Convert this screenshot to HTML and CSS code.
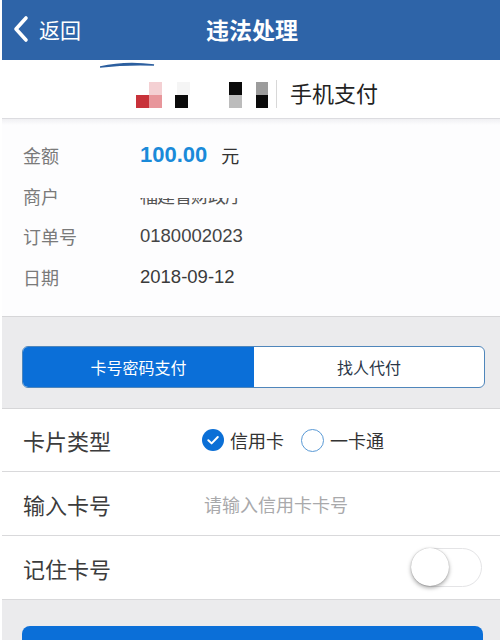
FILE: index.html
```html
<!DOCTYPE html>
<html lang="zh-CN">
<head>
<meta charset="utf-8">
<title>违法处理</title>
<link rel="stylesheet" href="styles.css">
</head>
<body>
<div class="page">
  <header class="header">
    <div class="back">
      <svg class="chev" width="20" height="28" viewBox="0 0 20 28"><path d="M15 3 L5 14 L15 25" fill="none" stroke="#fff" stroke-width="3.6" stroke-linecap="round" stroke-linejoin="round"/></svg>
      <span>返回</span>
    </div>
    <h1 class="title">违法处理</h1>
    <div></div>
  </header>

  <section class="brand">
    <svg class="logo" width="178" height="58" viewBox="0 0 178 58">
      <path d="M0 7 Q26 1 54 5 Q26 4 0 7 Z" fill="#2c5f9f" stroke="#2c5f9f" stroke-width="1.5"/>
      <rect x="36" y="35" width="13" height="13" fill="#c8323a"/>
      <rect x="49" y="35" width="13" height="13" fill="#e8969b"/>
      <rect x="49" y="22" width="13" height="13" fill="#f4d0d3"/>
      <rect x="75" y="35" width="13" height="13" fill="#0a0a0a"/>
      <rect x="77" y="22" width="13" height="13" fill="#f5f5f5"/>
      <rect x="129" y="22" width="13" height="13" fill="#0a0a0a"/>
      <rect x="129" y="35" width="13" height="13" fill="#bcbcbc"/>
      <rect x="156" y="22" width="12" height="13" fill="#9c9c9c"/>
      <rect x="156" y="35" width="12" height="13" fill="#0a0a0a"/>
      <rect x="176" y="20" width="1" height="28" fill="#d8d8d8"/>
    </svg>
    <span class="brand-name">手机支付</span>
  </section>

  <section class="details">
    <div class="drow"><span class="dlabel">金额</span><span class="dval"><b class="amount">100.00</b><span class="unit">元</span></span></div>
    <div class="drow"><span class="dlabel">商户</span><span class="dval"><span class="clip"><span class="clipped">福建省财政厅</span></span></span></div>
    <div class="drow"><span class="dlabel">订单号</span><span class="dval order">0180002023</span></div>
    <div class="drow"><span class="dlabel">日期</span><span class="dval">2018-09-12</span></div>
  </section>

  <section class="seg-area">
    <div class="seg">
      <div class="seg-item active">卡号密码支付</div>
      <div class="seg-item">找人代付</div>
    </div>
  </section>

  <section class="form">
    <div class="frow">
      <span class="flabel">卡片类型</span>
      <div class="options">
        <span class="opt"><span class="radio on"><svg width="22" height="22" viewBox="0 0 22 22"><circle cx="11" cy="11" r="11" fill="#0b6fd6"/><path d="M6.3 11.2 L9.6 14.4 L15.8 8" fill="none" stroke="#fff" stroke-width="2" stroke-linecap="round" stroke-linejoin="round"/></svg></span>信用卡</span>
        <span class="opt"><span class="radio off"></span>一卡通</span>
      </div>
    </div>
    <div class="frow">
      <span class="flabel">输入卡号</span>
      <span class="placeholder">请输入信用卡卡号</span>
    </div>
    <div class="frow">
      <span class="flabel">记住卡号</span>
      <span class="toggle"><span class="knob"></span></span>
    </div>
  </section>

  <section class="foot">
    <button class="submit">确认支付</button>
  </section>
</div>
</body>
</html>
```

FILE: styles.css
```css
* { box-sizing: border-box; }
html, body { margin: 0; padding: 0; }
body {
  width: 500px;
  height: 640px;
  overflow: hidden;
  background: #ffffff;
  font-family: "Liberation Sans", "Noto Sans CJK SC", sans-serif;
}
.page {
  margin-left: 2px;
  width: 498px;
  height: 640px;
  background: #ebebed;
}
.header {
  height: 60px;
  background: #2e64a8;
  display: grid;
  grid-template-columns: 1fr auto 1fr;
  align-items: center;
  color: #fff;
}
.back {
  display: flex;
  align-items: center;
  padding-left: 9px;
  gap: 8px;
  font-size: 21px;
  font-family: "Noto Sans CJK SC", sans-serif;
  padding-bottom: 2px;
}
.title {
  margin: 0;
  font-size: 23px;
  font-weight: 700;
  font-family: "Noto Sans CJK SC", sans-serif;
  padding-bottom: 2px;
  padding-left: 2px;
}
.brand {
  height: 59px;
  background: #fff;
  border-bottom: 1px solid #dcdce0;
  display: flex;
  align-items: flex-start;
  padding-left: 98px;
}
.logo { display: block; }
.brand-name {
  margin-left: 12px;
  margin-top: 16px;
  font-size: 22px;
  color: #222;
  font-family: "Noto Sans CJK SC", sans-serif;
}
.details {
  background: linear-gradient(#f0f0f3, #fdfdfe 6px, #fdfdfe);
  padding: 16px 0 19px 21px;
  border-bottom: 1px solid #d6d6d8;
}
.drow {
  height: 40.5px;
  display: grid;
  grid-template-columns: 117px 1fr;
  align-items: center;
}
.dlabel {
  font-size: 18px;
  color: #7a7a7a;
  font-family: "Noto Sans CJK SC", sans-serif;
}
.dval {
  font-size: 18.5px;
  color: #3a3a3a;
  display: flex;
  align-items: center;
}
.amount {
  font-size: 22px;
  color: #1a8ad9;
  font-weight: 700;
}
.unit {
  margin-left: 14px;
  font-size: 18px;
  color: #333;
  font-family: "Noto Sans CJK SC", sans-serif;
}
.clip {
  display: block;
  height: 9px;
  overflow: hidden;
  margin-top: 14px;
  position: relative;
}
.clipped {
  display: block;
  margin-top: -16px;
  font-size: 18px;
  color: #555;
  font-family: "Noto Sans CJK SC", sans-serif;
  letter-spacing: -1px;
}
.order { color: #444; }
.seg-area {
  background: #ebebed;
  padding: 29px 15px 20px 20px;
  border-bottom: 1px solid #d6d6d8;
}
.seg {
  height: 42px;
  display: grid;
  grid-template-columns: 231px 1fr;
  border: 1px solid #4f86bb;
  border-radius: 6px;
  overflow: hidden;
  background: #fff;
}
.seg-item {
  display: flex;
  align-items: center;
  justify-content: center;
  font-size: 16px;
  color: #2a3646;
  font-family: "Noto Sans CJK SC", sans-serif;
}
.seg-item.active {
  background: #0b6fd8;
  color: #fff;
}
.form { background: #fff; }
.frow {
  height: 64px;
  border-bottom: 1px solid #d9d9db;
  display: grid;
  grid-template-columns: 179px 1fr auto;
  align-items: center;
  padding-left: 21px;
  padding-right: 18px;
}
.frow:first-child { height: 63px; }
.flabel {
  font-size: 22px;
  color: #3c3c3c;
  font-family: "Noto Sans CJK SC", sans-serif;
}
.options {
  display: flex;
  align-items: center;
  gap: 17px;
}
.opt {
  display: flex;
  align-items: center;
  gap: 6px;
  font-size: 18px;
  color: #333;
  font-family: "Noto Sans CJK SC", sans-serif;
}
.radio { width: 22px; height: 22px; display: block; }
.radio svg { display: block; }
.radio.off {
  border: 1.6px solid #5a9ad6;
  border-radius: 50%;
  width: 23px;
  height: 23px;
}
.placeholder {
  font-size: 18px;
  color: #a9a9ab;
  font-family: "Noto Sans CJK SC", sans-serif;
  margin-left: 2px;
}
.toggle {
  grid-column: 3;
  width: 71px;
  height: 39px;
  border: 1.5px solid #e4e4e6;
  border-radius: 20px;
  background: #fff;
  position: relative;
  display: block;
}
.knob {
  position: absolute;
  left: -1px;
  top: -1px;
  width: 38px;
  height: 38px;
  border-radius: 50%;
  background: #fff;
  box-shadow: 0 2px 4px rgba(0,0,0,0.35), 0 0 1px rgba(0,0,0,0.3);
}
.foot {
  background: #ebebed;
  padding: 26px 17px 0 20px;
}
.submit {
  width: 100%;
  height: 50px;
  border: none;
  border-radius: 8px;
  background: #0b6fd8;
  color: #fff;
  font-size: 20px;
  font-family: "Noto Sans CJK SC", sans-serif;
  padding-top: 2px;
  display: block;
}
```
